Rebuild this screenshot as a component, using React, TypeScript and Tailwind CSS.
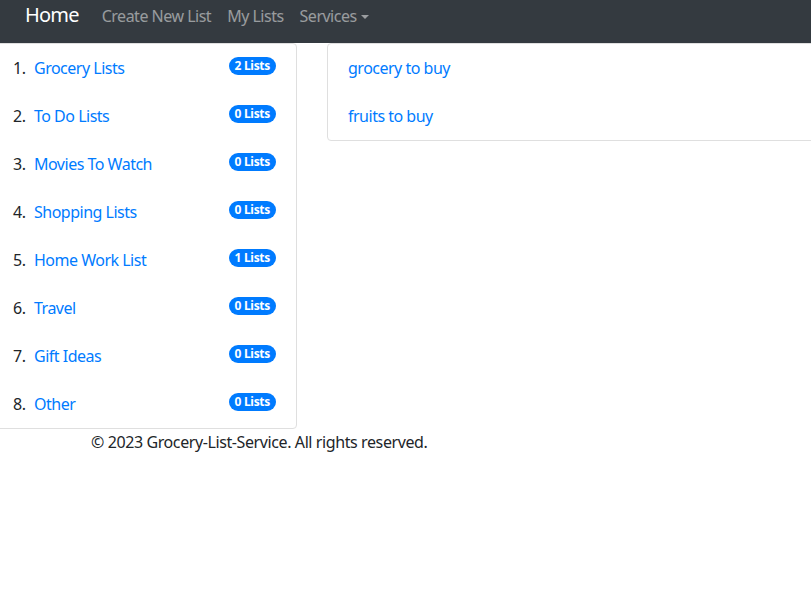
const categories = [
  { name: 'Grocery Lists', count: 2 },
  { name: 'To Do Lists', count: 0 },
  { name: 'Movies To Watch', count: 0 },
  { name: 'Shopping Lists', count: 0 },
  { name: 'Home Work List', count: 1 },
  { name: 'Travel', count: 0 },
  { name: 'Gift Ideas', count: 0 },
  { name: 'Other', count: 0 },
]

const lists = ['grocery to buy', 'fruits to buy']

export default function App() {
  return (
    <div className="min-h-[599px] bg-white text-[#212529] text-base" style={{ fontFamily: '"Noto Sans", "Open Sans", sans-serif' }}>
      {/* Navbar */}
      <nav className="h-[43px] bg-[#343a40] flex items-start pt-[2px] pl-[25px]">
        <a className="text-white text-[20px] leading-[26px] mr-[23px] tracking-[-0.8px]">Home</a>
        <div className="flex items-center gap-4 text-white/50 leading-[26px] pt-[1px] tracking-[-0.5px]">
          <a>Create New List</a>
          <a>My Lists</a>
          <a className="flex items-center">
            Services
            <span className="ml-[4px] mt-[2px] border-x-[4px] border-t-[4px] border-x-transparent border-t-white/50" />
          </a>
        </div>
      </nav>

      <div className="flex items-start">
        {/* Categories */}
        <ol className="ml-[-10px] w-[307px] border border-[#dfdfdf] rounded-[4px] bg-white">
          {categories.map((c, i) => (
            <li key={c.name} className="flex items-start justify-between h-[48px] pt-[12px] pl-[22px] pr-[20px]">
              <span className="leading-6 tracking-[-0.5px]">
                <span className="inline-block w-[21px]">{i + 1}.</span>
                <a className="text-[#007bff]">{c.name}</a>
              </span>
              <span className="mt-[1px] rounded-full bg-[#007bff] text-white text-[12px] font-bold leading-none px-[6px] py-[3px] tracking-[-0.3px]">
                {c.count} Lists
              </span>
            </li>
          ))}
        </ol>

        {/* Lists */}
        <div className="ml-[30px] flex-1 mr-[-10px] border border-[#dfdfdf] rounded-[4px]">
          {lists.map(l => (
            <div key={l} className="h-[48px] pt-[12px] pl-[20px] leading-6 tracking-[-0.5px]">
              <a className="text-[#007bff]">{l}</a>
            </div>
          ))}
        </div>
      </div>

      <footer className="pl-[91px] leading-6 mt-[1px] tracking-[-0.4px]">
        © 2023 Grocery-List-Service. All rights reserved.
      </footer>
    </div>
  )
}
